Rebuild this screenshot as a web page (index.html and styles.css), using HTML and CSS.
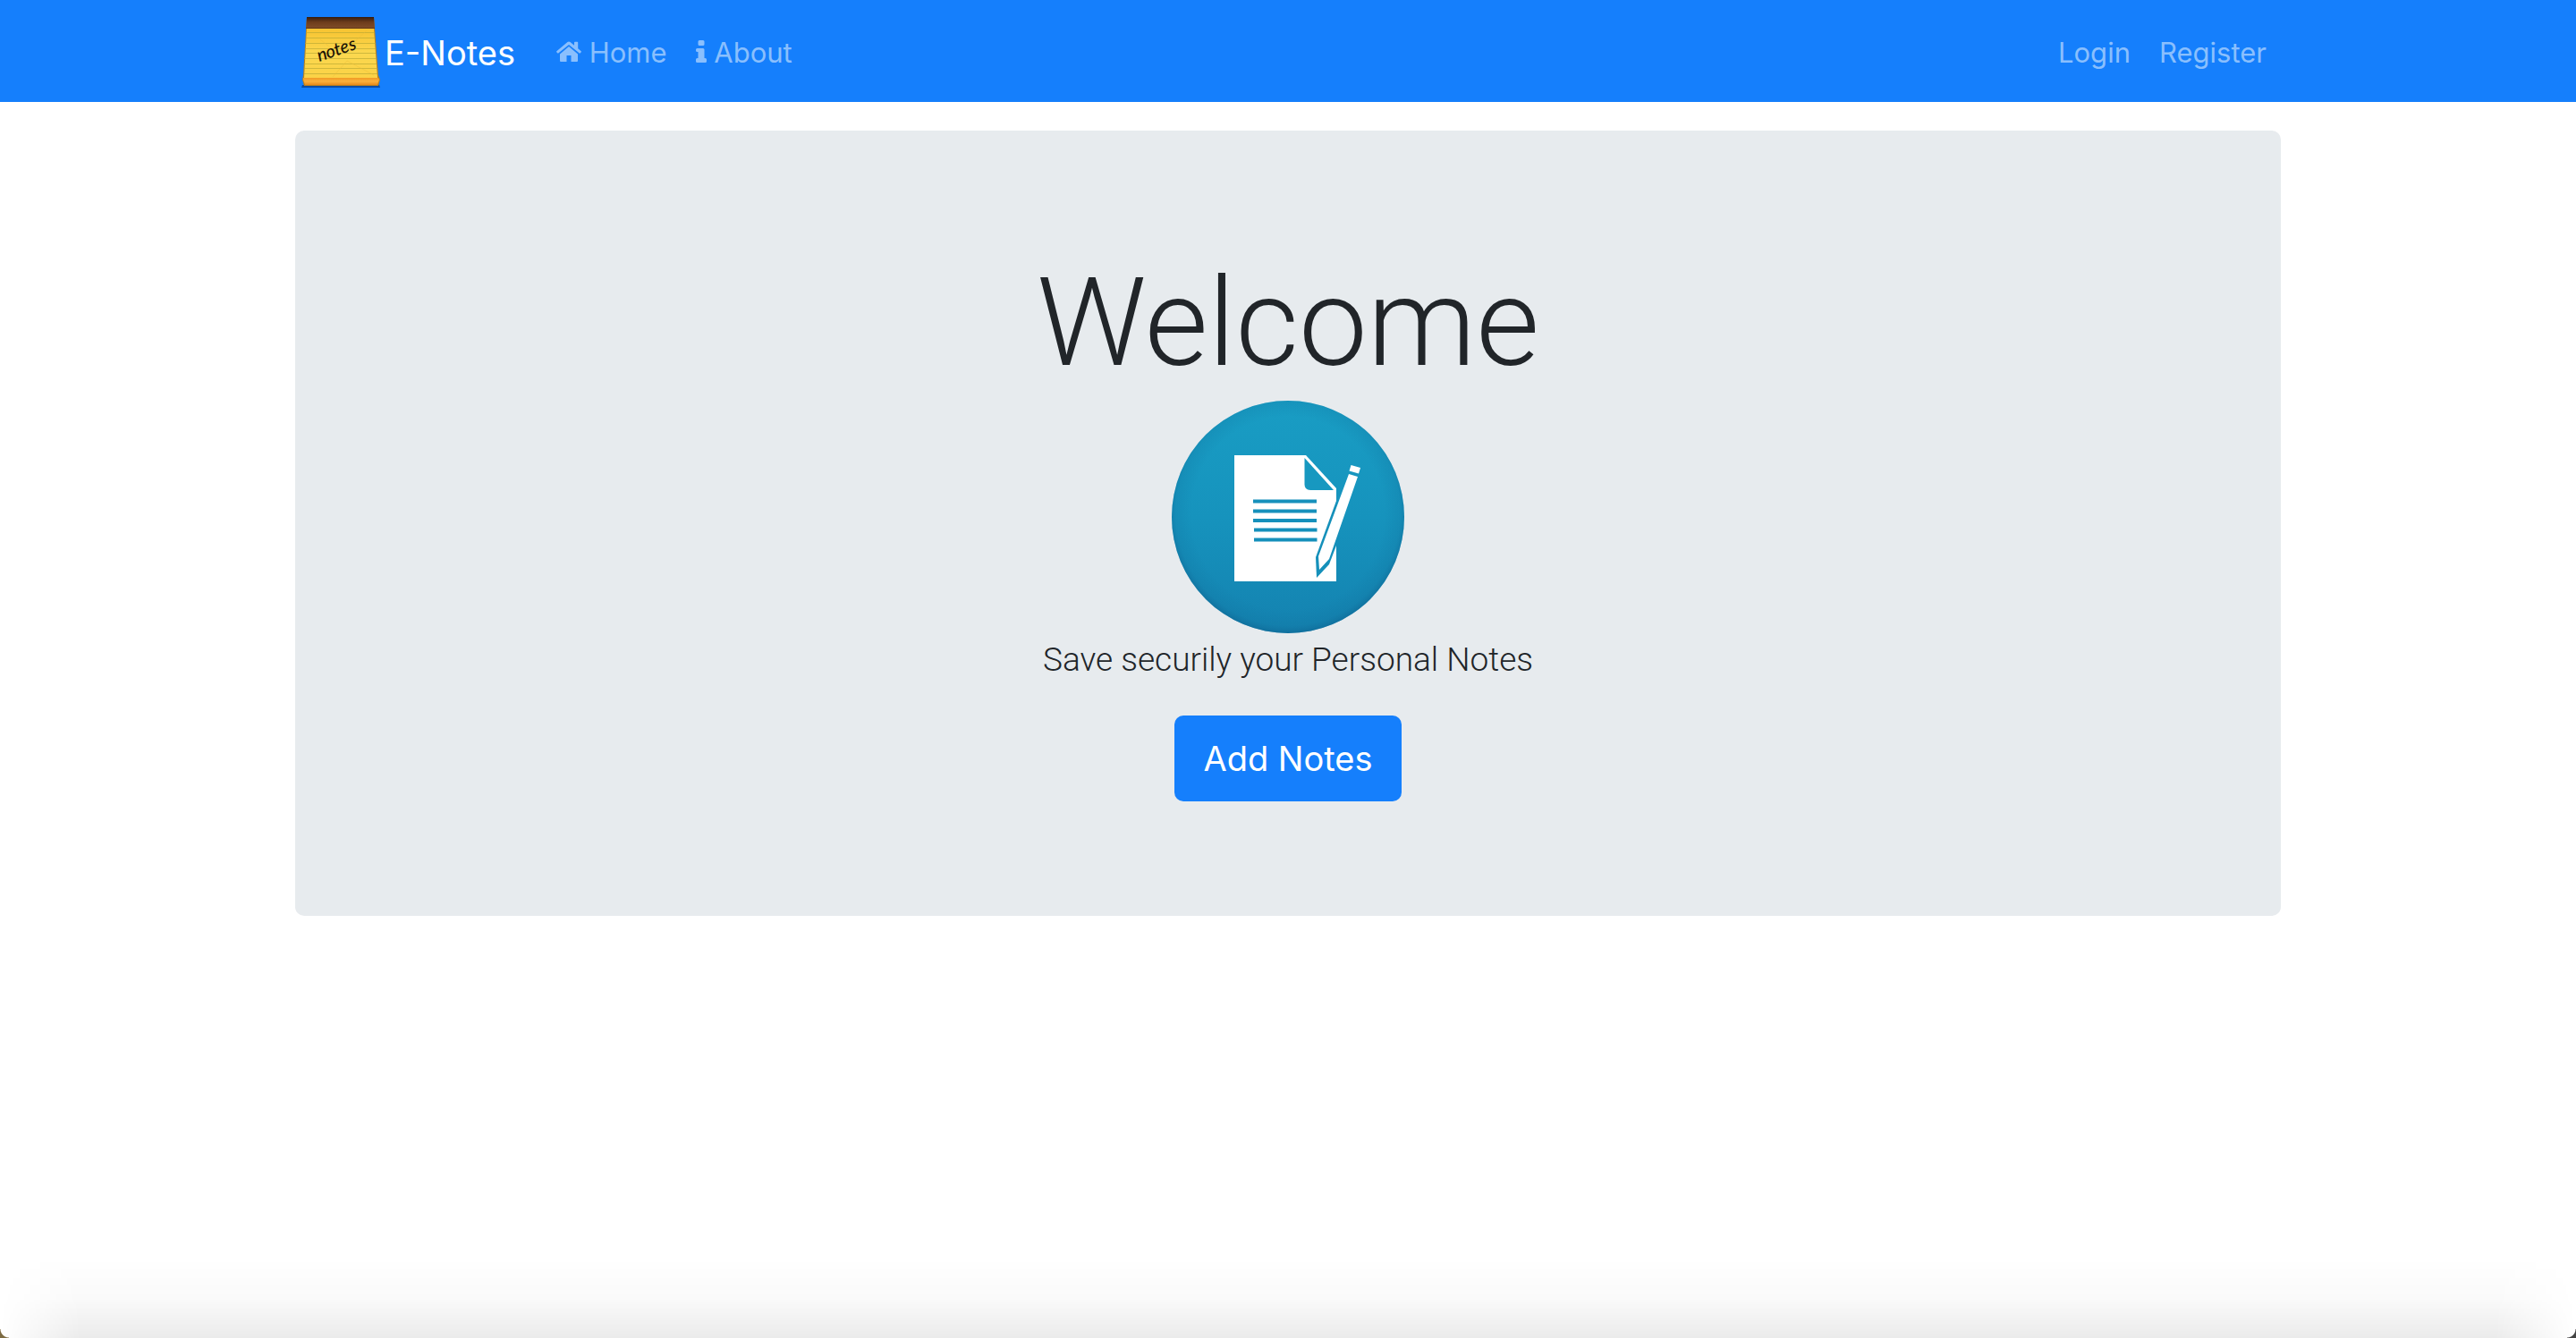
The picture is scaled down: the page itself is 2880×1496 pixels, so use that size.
FILE: index.html
```html
<!DOCTYPE html>
<html lang="en">
<head>
<meta charset="utf-8">
<title>E-Notes</title>
<link rel="stylesheet" href="styles.css">
</head>
<body>
<nav class="navbar">
  <div class="container navbar-inner">
    <a class="brand" href="#">
      <svg class="brand-logo" viewBox="0 0 98 82" aria-hidden="true">
        <defs>
          <linearGradient id="binding" x1="0" y1="0" x2="0" y2="1">
            <stop offset="0" stop-color="#351c0e"/>
            <stop offset="0.45" stop-color="#6e3d1c"/>
            <stop offset="0.9" stop-color="#7d4a26"/>
            <stop offset="1" stop-color="#4d2b12"/>
          </linearGradient>
          <linearGradient id="paper" x1="0" y1="0" x2="0" y2="1">
            <stop offset="0" stop-color="#f7c331"/>
            <stop offset="0.5" stop-color="#fbd84f"/>
            <stop offset="1" stop-color="#fbd246"/>
          </linearGradient>
          <linearGradient id="pad" x1="0" y1="0" x2="0" y2="1">
            <stop offset="0" stop-color="#f09a25"/>
            <stop offset="0.5" stop-color="#fbb03b"/>
            <stop offset="1" stop-color="#e88a1b"/>
          </linearGradient>
        </defs>
        <path d="M8 79h86l1 3H7z" fill="#0c4da6"/>
        <path d="M13 3h75l5 65 2 5-2 7H10l-2-7 1-5z" fill="#b8801e"/>
        <path d="M13 16h75l4 55H10z" fill="url(#paper)"/>
        <path d="M9 71h84l1 2-2 6H11l-2-6z" fill="url(#pad)"/>
        <path d="M13 3h75l1 13H12z" fill="url(#binding)"/>
        <path d="M12 20.500h77M12 26.500h77M11 32.500h79M11 38.500h79M11 43.500h79M10 49.500h81M10 55.500h81M10 60.500h82M10 66.500h82" stroke="#b8a834" stroke-width="1" opacity=".65"/>
        <path d="M28 28l22 18 30-28M42 70l16-18 30 16" stroke="#eebc36" fill="none" opacity=".4"/>
        <text class="logo-text" y="53" x="27 37 47 54 64" transform="rotate(-19 27 53)">notes</text>
      </svg>
      <span>E-Notes</span>
    </a>
    <ul class="nav-list">
      <li><a class="nav-link" href="#"><svg class="icon-home" viewBox="0 0 28 24" aria-hidden="true"><path d="M4 14.500L14 6l10 8.500V22q0 1-1 1h-6.500v-7h-5v7H5q-1 0-1-1z"/><path d="M12.500 1q1.500-1.200 3 0L20 4.800V1.500q0-.8.8-.8h2.600q.8 0 .8.800v6.800l3.500 3q.4.400 0 .9l-1 1.200q-.4.400-.9 0L14 4 2.200 13.400q-.5.400-.9 0l-1-1.200q-.4-.5 0-.9z"/></svg> Home</a></li>
      <li><a class="nav-link" href="#"><svg class="icon-info" viewBox="0 0 12 26" aria-hidden="true"><path d="M4 1h4q1.500 0 1.500 1.500v3Q9.500 7 8 7H4Q2.500 7 2.500 5.500v-3Q2.500 1 4 1zM1.500 10H8q1.500 0 1.500 1.500V21h1q1.500 0 1.500 1.500v2q0 1.500-1.500 1.500h-9Q0 26 0 24.500v-2Q0 21 1.500 21h1v-7h-1Q0 14 0 12.500v-1Q0 10 1.500 10z"/></svg> About</a></li>
    </ul>
    <ul class="nav-list nav-right">
      <li><a class="nav-link" href="#">Login</a></li>
      <li><a class="nav-link" href="#">Register</a></li>
    </ul>
  </div>
</nav>
<main class="container">
  <section class="jumbotron">
    <h1>Welcome</h1>
    <svg class="hero" viewBox="0 0 260 260" aria-hidden="true">
      <defs>
        <linearGradient id="disc" x1="0" y1="0" x2="0" y2="1">
          <stop offset="0" stop-color="#199dc4"/>
          <stop offset="0.5" stop-color="#1693bd"/>
          <stop offset="1" stop-color="#1482b0"/>
        </linearGradient>
        <radialGradient id="rim" cx="130" cy="126" r="135" gradientUnits="userSpaceOnUse">
          <stop offset="0.8" stop-color="#0f6d99" stop-opacity="0"/>
          <stop offset="0.93" stop-color="#0f6d99" stop-opacity=".2"/>
          <stop offset="1" stop-color="#0d5f8c" stop-opacity=".6"/>
        </radialGradient>
      </defs>
      <circle cx="130" cy="130" r="130" fill="url(#disc)"/>
      <circle cx="130" cy="130" r="130" fill="url(#rim)"/>
      <path d="M70 61h80l34 37v104H70z" fill="#fff"/>
      <path d="M148.500 64l32.500 36h-26q-6.500 0-6.500-6.500z" fill="#1798c0"/>
      <path d="M91 112.500h71M91 123.500h71M91 134h71M92 144.500h70.500M92 155.500h70.500" stroke="#1690bb" stroke-width="4"/>
      <path d="M184 112v50l-8 21-14 15-1-23z" fill="#1590ba"/>
      <path d="M198 82l10 3-32 92-11 12-1-15zM200.500 72l10.500 3-2 6.500-10.500-3z" fill="#fff"/>
    </svg>
    <p class="lead">Save securily your Personal Notes</p>
    <a class="btn" href="#">Add Notes</a>
  </section>
</main>
<div class="window-edge"></div>
</body>
</html>
```
FILE: styles.css
```css
* { box-sizing: border-box; }
body {
  margin: 0;
  min-height: 100vh;
  background: #fff;
  color: #212529;
  font: 400 31px/48px Inter, "Liberation Sans", sans-serif;
}
a { text-decoration: none; }
.container {
  width: 100%;
  max-width: 2280px;
  margin: 0 auto;
  padding: 0 30px;
}
.navbar { padding: 16px 0; background: #157ffc; }
.navbar-inner { display: flex; align-items: center; }
.brand {
  display: flex;
  align-items: center;
  gap: 2px;
  margin-right: 30px;
  color: #fff;
  font-size: 38px;
}
.brand span, .nav-list { padding-top: 3px; }
.brand-logo { width: 98px; height: 82px; }
.logo-text {
  font: italic 500 20px Lato, sans-serif;
  fill: #1c1305;
}
.nav-list { display: flex; margin: 0; padding: 3px 0 0; list-style: none; }
.nav-right { margin-left: auto; }
.nav-link {
  display: block;
  padding: 0 16px;
  color: #8abffd;
}
.nav-link svg { fill: currentColor; vertical-align: baseline; }
.icon-home { width: 28px; height: 24px; }
.icon-info { width: 12px; height: 26px; }
.jumbotron {
  display: flex;
  flex-direction: column;
  align-items: center;
  margin-top: 32px;
  padding: 128px 64px;
  border-radius: 10px;
  background: #e7ebee;
}
h1 {
  margin: 0;
  font-family: Roboto, sans-serif;
  font-size: 137px;
  font-weight: 300;
  line-height: 174px;
}
.hero { width: 260px; height: 260px; }
.lead {
  margin: 0 0 32px;
  font-family: Roboto, sans-serif;
  font-size: 37px;
  font-weight: 300;
  line-height: 60px;
}
.btn {
  padding: 18px 32px;
  border-radius: 10px;
  background: #157ffc;
  color: #fff;
  font-size: 38px;
  line-height: 60px;
}
.window-edge {
  position: fixed;
  inset: auto 0 0;
  height: 90px;
  pointer-events: none;
}
.window-edge::before {
  content: "";
  position: absolute;
  inset: 0;
  background: linear-gradient(#fff0, #00000005 50%, #00000014);
  mask-image: linear-gradient(90deg, transparent, #000 90px, #000 calc(100% - 90px), transparent);
}
.window-edge::after {
  content: "";
  position: absolute;
  inset: auto 0 0;
  height: 10px;
  background:
    radial-gradient(circle at 10px 0, transparent 9px, #7d6b43 10px) left / 10px 10px no-repeat,
    radial-gradient(circle at 0 0, transparent 9px, #444 10px) right / 10px 10px no-repeat;
}
```
